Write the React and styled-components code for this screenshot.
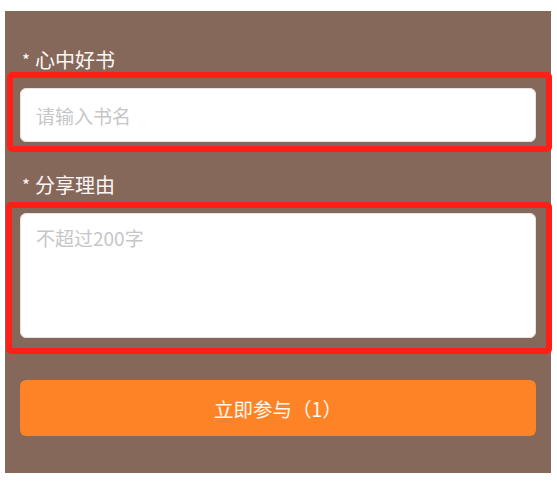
import React from "react";
import styled, { createGlobalStyle } from "styled-components";

const Global = createGlobalStyle`
  html, body { margin: 0; padding: 0; background: #ffffff; }
  body { font-family: "Noto Sans CJK SC", "Noto Sans", sans-serif; }
  * { box-sizing: border-box; }
`;

const Panel = styled.div`
  width: 546px;
  margin: 11px 0 0 5px;
  background: #86685b;
  padding: 36px 15px 37px 15px;
  display: flex;
  flex-direction: column;
`;

const Label = styled.div`
  color: #fbf7f5;
  font-size: 20px;
  line-height: 26px;
  height: 26px;
  margin-top: ${(p) => p.$top || 0}px;
  margin-bottom: 15px;
  padding-left: 2px;
  white-space: nowrap;
`;

const Star = styled.span`
  font-size: 17px;
  margin-right: 5px;
  position: relative;
  top: -1px;
`;

const Field = styled.div`
  position: relative;
`;

const Highlight = styled.div`
  position: absolute;
  top: ${(p) => p.$t}px;
  left: ${(p) => p.$l}px;
  right: ${(p) => p.$r}px;
  bottom: ${(p) => p.$b}px;
  border: 6.5px solid #ff1f17;
  border-radius: 5px;
  pointer-events: none;
`;

const baseField = `
  display: block;
  width: 100%;
  border: 1px solid #e6e2e0;
  border-radius: 6px;
  background: #ffffff;
  font-family: "Noto Sans CJK SC", "Noto Sans", sans-serif;
  font-size: 19px;
  color: #333;
  outline: none;
  padding: 0 15px;
  &::placeholder { color: #c6c6c8; }
`;

const TextInput = styled.input`
  ${baseField}
  height: 54px;
`;

const TextArea = styled.textarea`
  ${baseField}
  height: 125px;
  resize: none;
  padding-top: 10px;
  line-height: 27px;
`;

const Button = styled.button`
  margin-top: 42px;
  height: 56px;
  width: 100%;
  border: none;
  border-radius: 6px;
  background: #fe8226;
  color: #fff8f0;
  font-family: "Noto Sans CJK SC", "Noto Sans", sans-serif;
  font-size: 19.5px;
  display: flex;
  align-items: center;
  justify-content: center;
  padding: 0;
`;

export default function App() {
  return (
    <>
      <Global />
      <Panel>
        <Label>
          <Star>*</Star>心中好书
        </Label>
        <Field>
          <TextInput placeholder="请输入书名" />
          <Highlight $t={-16} $l={-13} $r={-16} $b={-10} />
        </Field>
        <Label $top={30}>
          <Star>*</Star>分享理由
        </Label>
        <Field>
          <TextArea placeholder="不超过200字" />
          <Highlight $t={-11} $l={-14} $r={-16} $b={-16} />
        </Field>
        <Button>立即参与（1）</Button>
      </Panel>
    </>
  );
}
